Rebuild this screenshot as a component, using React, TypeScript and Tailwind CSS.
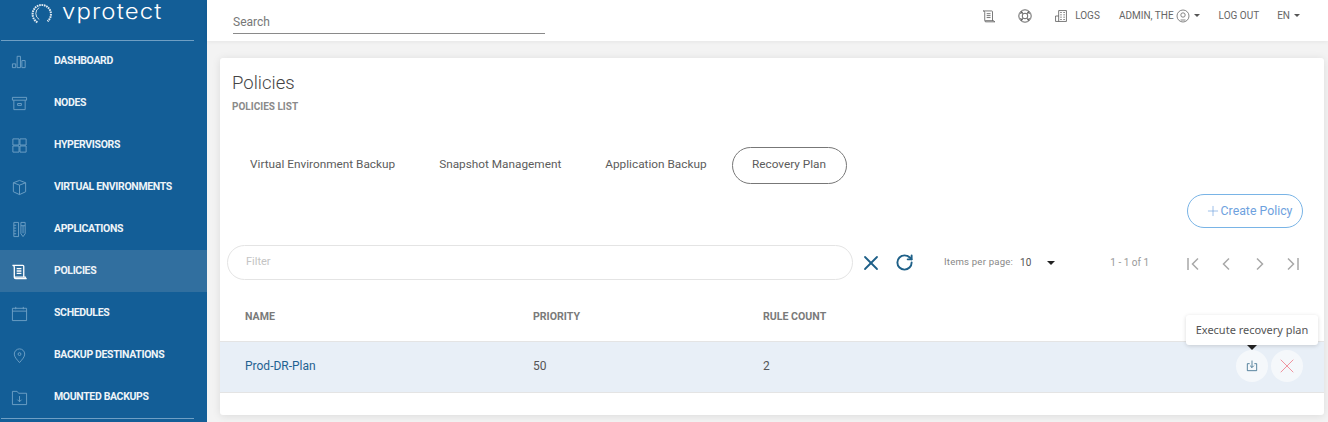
import { ReactNode } from "react";
import { Plus, RotateCw, X } from "lucide-react";

const Ico = ({ children, className = "" }: { children: ReactNode; className?: string }) => (
  <svg viewBox="0 0 18 18" fill="none" stroke="currentColor" strokeWidth="1" className={className}>
    {children}
  </svg>
);

const scrollPath =
  "M1.500 2.500h11a1 1 0 0 1 1 1v11.500M1.500 2.500c1.300 0 2 .7 2 2v10.500a1.500 1.500 0 0 0 1.500 1.500h11.500c-1-.3-1.500-.9-1.500-1.500h-11M6 6h5M6 8.500h5M6 11h5";

const navItems: { label: string; icon: ReactNode; active?: boolean }[] = [
  {
    label: "DASHBOARD",
    icon: <path d="M1.500 11.500h3.500v4H1.500zM6.500 3.500H10v12H6.500zM11.500 8H15v7.500h-3.500z" />,
  },
  {
    label: "NODES",
    icon: <path d="M1.500 2.500h15v3h-15zM3 5.500v10h12v-10M7 9h4v2H7z" />,
  },
  {
    label: "HYPERVISORS",
    icon: <path d="M2 2h6.500v6.500H2zM9.500 2H16v6.500H9.500zM2 9.500h6.500V16H2zM9.500 9.500H16V16H9.500z" />,
  },
  {
    label: "VIRTUAL ENVIRONMENTS",
    icon: <path d="M9 1.500l6.500 2.500v9.500L9 16.500l-6.500-3V4zM2.500 4L9 6.500 15.500 4M9 6.500v10" />,
  },
  {
    label: "APPLICATIONS",
    icon: <path d="M3 1.500h5v15H3zM3 4.500h2.500M3 7.500h2.500M3 10.500h2.500M3 13.500h2.500M10.500 1.500H15v12l-2.250 3-2.250-3zM10.500 5H15M12.750 5v8" />,
  },
  {
    label: "POLICIES",
    active: true,
    icon: <path d={scrollPath} strokeWidth="1.400" />,
  },
  {
    label: "SCHEDULES",
    icon: <path d="M1.500 3.500h15v13h-15zM1.500 6.500h15M5 2v2.500M13 2v2.500" />,
  },
  {
    label: "BACKUP DESTINATIONS",
    icon: <path d="M9 16.500C6 13 3.500 10.500 3.500 7.500a5.500 5.500 0 0 1 11 0c0 3-2.500 5.500-5.500 9zM9 6a1.500 1.500 0 1 0 0 3 1.500 1.500 0 0 0 0-3z" />,
  },
  {
    label: "MOUNTED BACKUPS",
    icon: <path d="M1.500 2.500h5l1.500 2h8.500v12h-15zM9 7.500v6M6.800 11.300L9 13.500l2.200-2.200" />,
  },
];

const tabs = ["Virtual Environment Backup", "Snapshot Management", "Application Backup"];

const Pager = ({ d, box, className }: { d: string; box: string; className: string }) => (
  <svg viewBox={box} fill="none" stroke="currentColor" strokeWidth="1.500" className={`mt-[2px] h-[14px] text-[#a8a8a8] ${className}`}>
    <path d={d} />
  </svg>
);

const Caret = ({ className }: { className: string }) => (
  <span className={`h-0 w-0 border-x-[3px] border-t-[3px] border-x-transparent border-t-[#555] ${className}`} />
);

export default function App() {
  return (
    <div className="flex h-[422px] w-[1328px] overflow-hidden bg-[#f3f3f3] font-['Roboto',sans-serif] text-[#4a4a4a]">
      <aside className="w-[207px] shrink-0 bg-[#135e97] text-white">
        <div className="mx-[1px] flex h-[41px] w-[193px] items-start border-b border-[#6f9fc4] pl-[30px]">
          <svg viewBox="0 0 24 24" className="mt-[3px] h-[22px] w-[22px] text-[#dfe9f1]" fill="none" stroke="currentColor">
            <path d="M7 21a10 10 0 1 1 11-1" strokeWidth="2.200" strokeDasharray="1.800 .8" />
            <path d="M9 18a7.500 7.500 0 0 1 0-13" strokeWidth="1" />
          </svg>
          <span className="ml-[9px] origin-left scale-x-[1.140] font-['Inter',sans-serif] text-[21px] leading-[24px] tracking-[1px] font-light text-white">vprotect</span>
        </div>
        <nav className="mt-[-1px]">
          {navItems.map((item) => (
            <div
              key={item.label}
              className={`flex h-[42px] items-center ${item.active ? "bg-[#316f9f]" : ""}`}
            >
              <Ico className={`ml-[11px] h-[17px] w-[17px] ${item.active ? "text-white" : "text-[#6ea0c6]"}`}>{item.icon}</Ico>
              <span className="ml-[26px] text-[10.500px] font-bold tracking-[-0.35px] text-[#eef4f8]">{item.label}</span>
            </div>
          ))}
        </nav>
        <div className="mx-[1px] w-[193px] border-t border-[#6f9fc4]" />
      </aside>

      <div className="min-w-0 flex-1">
        <header className="flex h-[41px] items-start bg-white shadow-[0_1px_4px_rgba(0,0,0,0.06)]">
          <div className="ml-[26px] mt-[15px] h-[19px] w-[312px] border-b border-[#8a8a8a] text-[12px] leading-[14px] text-[#777]">Search</div>
          <div className="ml-auto mr-[28px] mt-[8px] flex items-center text-[10px] text-[#666]">
            <Ico className="h-[14px] w-[14px] text-[#555]">
              <path d={scrollPath} />
            </Ico>
            <svg viewBox="0 0 14 14" fill="none" stroke="currentColor" strokeWidth=".9" className="ml-[22px] h-[14px] w-[14px] text-[#555]">
              <circle cx="7" cy="7" r="6.200" />
              <circle cx="7" cy="7" r="2.800" />
              <path d="M2 4.500l3-1.500M3 2l1.500 3M12 4.500L9 3M11 2L9.500 5M2 9.500l3 1.500M3 12l1.500-3M12 9.500L9 11M11 12L9.500 9" />
            </svg>
            <Ico className="ml-[22px] h-[14px] w-[14px] text-[#555]">
              <path d="M6 2h10v14H2V9h4V2M6 16V9M8 4.500h2M12 4.500h2M8 7.500h2M12 7.500h2M8 10.500h2M12 10.500h2M8 13.500h2M12 13.500h2" />
            </Ico>
            <span className="ml-[7px]">LOGS</span>
            <span className="ml-[19px]">ADMIN, THE</span>
            <svg viewBox="0 0 14 14" className="ml-[2px] h-[14px] w-[14px]" fill="none" stroke="currentColor" strokeWidth=".8">
              <circle cx="7" cy="7" r="6" />
              <circle cx="7" cy="6" r="2.200" />
              <path d="M4.500 11h5" />
            </svg>
            <Caret className="ml-[4px]" />
            <span className="ml-[19px]">LOG OUT</span>
            <span className="ml-[18px]">EN</span>
            <Caret className="ml-[4px]" />
          </div>
        </header>

        <main className="relative mx-[13px] mt-[17px] h-[357px] w-[1104px] rounded-[3px] bg-white shadow-[0_1px_8px_rgba(0,0,0,0.1)]">
          <div className="px-[12px] pt-[13px]">
            <h1 className="text-[18.500px] leading-[24px] font-light text-[#444]">Policies</h1>
            <p className="mt-[6px] text-[10px] leading-[12px] font-bold text-[#8a8a8a]">POLICIES LIST</p>
          </div>

          <div className="mt-[33px] ml-[8px] flex h-[38px] items-center text-[11.800px] text-[#5c5c5c]">
            {tabs.map((t) => (
              <span key={t} className="px-[22px]">{t}</span>
            ))}
            <span className="ml-[3px] flex h-[37px] w-[115px] items-center justify-center rounded-full border border-[#777]">Recovery Plan</span>
          </div>

          <div className="mt-[10px] flex justify-end pr-[21px]">
            <button className="flex h-[34px] w-[116px] items-center justify-center rounded-full border border-[#79b4e6] pl-[7px] text-[12.300px] text-[#6ea1de]">
              <Plus className="h-[16px] w-[16px]" strokeWidth={1} />
              Create Policy
            </button>
          </div>

          <div className="mt-[17px] flex h-[35px] items-center">
            <div className="ml-[7px] flex h-[35px] w-[626px] items-center rounded-full border border-[#e4e4e4] pl-[18px] text-[11px] text-[#c4c4c4]">Filter</div>
            <X className="ml-[6px] h-[24px] w-[24px] text-[#1e6088]" strokeWidth={1.800} />
            <RotateCw className="ml-[12px] h-[19px] w-[19px] text-[#1e6088]" strokeWidth={2.400} />
            <span className="ml-[30px] text-[9.600px] tracking-[0.2px] text-[#888]">Items per page:</span>
            <span className="ml-[7px] text-[10px] text-[#555]">10</span>
            <span className="ml-[16px] h-0 w-0 border-x-[4px] border-t-[4px] border-x-transparent border-t-[#222]" />
            <span className="ml-[55px] text-[10px] text-[#999]">1 - 1 of 1</span>
            <Pager box="0 0 14 14" d="M1 1v12M11 1.500L5.500 7l5.500 5.500" className="ml-[38px] w-[14px]" />
            <Pager box="0 0 8 14" d="M7 1.500L1.500 7 7 12.500" className="ml-[21px] w-[8px]" />
            <Pager box="0 0 8 14" d="M1 1.500L6.500 7 1 12.500" className="ml-[26px] w-[8px]" />
            <Pager box="0 0 14 14" d="M3 1.500L8.500 7 3 12.500M13 1v12" className="ml-[21px] w-[14px]" />
          </div>

          <div className="mt-[11px] flex h-[50px] items-center pt-[2px] text-[10.600px] font-bold text-[#7a7a7a]">
            <span className="ml-[25px] w-[288px]">NAME</span>
            <span className="w-[230px]">PRIORITY</span>
            <span>RULE COUNT</span>
          </div>
          <div className="flex h-[52px] items-center border-y border-[#e4e4e4] bg-[#e8eff7] pb-[2px] text-[12px]">
            <span className="ml-[25px] w-[288px] text-[#1f6291]">Prod-DR-Plan</span>
            <span className="w-[230px] text-[#555]">50</span>
            <span className="text-[#555]">2</span>
            <div className="ml-auto mr-[21px] flex gap-[3px]">
              <span className="flex h-[32px] w-[32px] items-center justify-center rounded-full bg-[#f5f8fb] text-[#2f6486]">
                <Ico className="h-[14px] w-[14px]">
                  <path d="M6 6H3v9h12V6h-3M9 2v9M6.500 8.500L9 11l2.500-2.500" />
                </Ico>
              </span>
              <span className="flex h-[32px] w-[32px] items-center justify-center rounded-full bg-[#f5f8fb] text-[#f0949f]">
                <X className="h-[24px] w-[24px]" strokeWidth={1} />
              </span>
            </div>
          </div>

          <div className="absolute top-[257px] left-[966px] flex h-[30px] w-[132px] items-center justify-center rounded-[3px] bg-white font-['Noto_Sans',sans-serif] text-[11px] text-[#555] shadow-[0_1px_4px_rgba(0,0,0,0.15)]">
            Execute recovery plan
          </div>
          <span className="absolute top-[287px] left-[1027px] h-0 w-0 border-x-[5px] border-t-[5px] border-x-transparent border-t-[#222]" />
        </main>
      </div>
    </div>
  );
}
